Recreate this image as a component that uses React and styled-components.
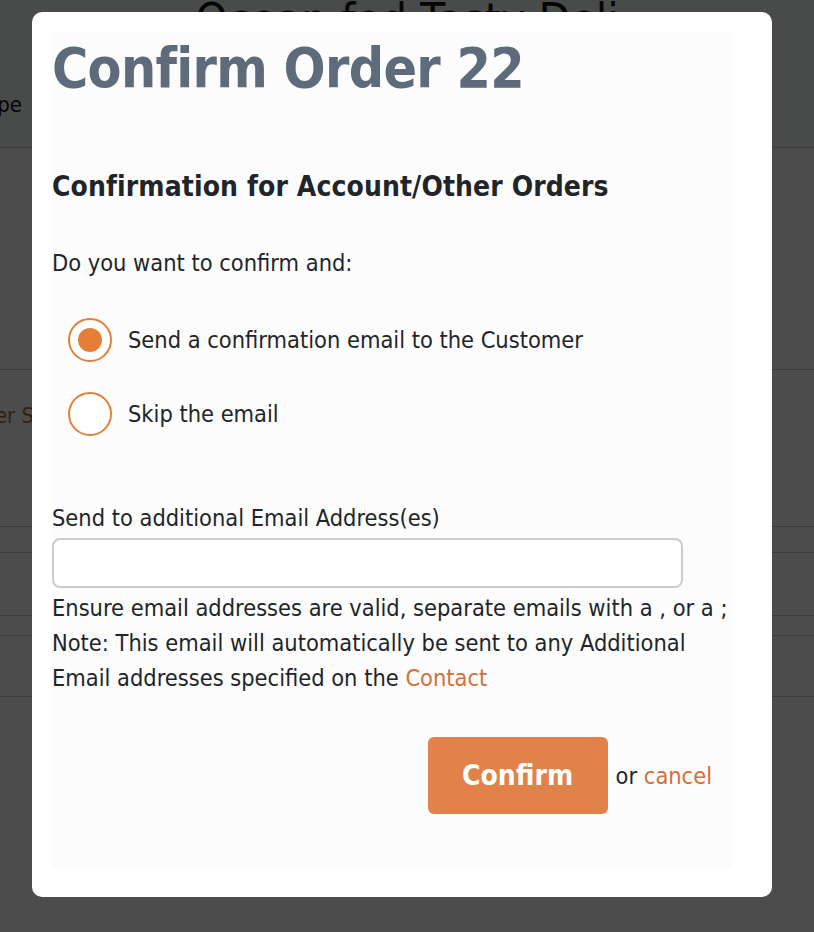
import React from 'react';
import styled, { createGlobalStyle } from 'styled-components';

const GlobalStyle = createGlobalStyle`
  html, body {
    margin: 0;
    padding: 0;
    background: #ffffff;
  }
  body {
    font-family: 'DejaVu Sans Condensed', 'DejaVu Sans', sans-serif;
    color: #212529;
  }
`

// the page that sits under the dimmed overlay
const BackPage = styled.div`
  width: 814px;
  height: 932px;
  overflow: hidden;
  background: #ffffff;
`
const BackHeader = styled.div`
  display: flow-root;
  height: 148px;
  background: #f6f7f9;
  border-bottom: 1px solid #cccccc;
  box-sizing: border-box;
  h1 {
    margin: -10px 0 0;
    text-align: center;
    font-size: 46px;
    font-weight: normal;
    line-height: 60px;
    color: #111111;
  }
`
const BackRow = styled.div`
  height: ${p => p.h}px;
  border-bottom: ${p => (p.line ? '1px solid #cccccc' : 'none')};
  box-sizing: border-box;
  display: flex;
  align-items: flex-start;
  justify-content: ${p => (p.edge ? 'flex-end' : 'flex-start')};
  width: ${p => (p.edge ? `${p.edge}px` : 'auto')};
  padding-top: ${p => p.pad || 0}px;
  span {
    white-space: nowrap;
    font-size: 22px;
    line-height: 26px;
    margin-left: ${p => p.shift || 0}px;
    color: ${p => p.tone || '#111111'};
  }
`
const BackLine = styled.div`
  height: ${p => p.h}px;
  border-bottom: 1px solid #cccccc;
  box-sizing: border-box;
`

const Overlay = styled.div`
  position: fixed;
  inset: 0;
  background: rgba(0, 0, 0, 0.7);
`
const Modal = styled.div`
  position: fixed;
  left: 32px;
  top: 12px;
  width: 740px;
  height: 885px;
  box-sizing: border-box;
  padding: 20px 40px 29px 20px;
  background: #ffffff;
  border-radius: 10px;
  display: flex;
`
const Panel = styled.div`
  flex: 1;
  background: #fcfcfc;
  display: flex;
  flex-direction: column;
`
const Title = styled.h1`
  margin: 0;
  font-size: 55px;
  line-height: 72px;
  font-weight: bold;
  color: #5e6b7a;
  letter-spacing: -0.7px;
`
const Subtitle = styled.h2`
  margin: 65px 0 0;
  font-size: 28px;
  line-height: 36px;
  font-weight: bold;
  color: #212529;
  letter-spacing: 0.1px;
`
const Text = styled.p`
  margin: ${p => p.top || 0}px 0 0;
  font-size: 23.4px;
  line-height: 35px;
  color: #212529;
`
const Options = styled.div`
  margin: 35px 0 0 16px;
  display: flex;
  flex-direction: column;
  gap: 26px;
`
const Option = styled.label`
  display: flex;
  align-items: center;
  gap: 16px;
  height: 48px;
  font-size: 23.4px;
  color: #212529;
`
const Radio = styled.span`
  width: 44px;
  height: 44px;
  box-sizing: border-box;
  border: 2px solid #e57e39;
  border-radius: 50%;
  background: #ffffff;
  display: flex;
  align-items: center;
  justify-content: center;
  &::after {
    content: '';
    width: 24px;
    height: 24px;
    border-radius: 50%;
    background: ${p => (p.checked ? '#e57e39' : 'transparent')};
  }
`
const EmailInput = styled.input`
  display: block;
  width: 631px;
  height: 50px;
  box-sizing: border-box;
  border: 2px solid #cccccc;
  border-radius: 8px;
  background: #ffffff;
  margin: 2px 0 0;
  font-size: 20px;
  outline: none;
`
const Link = styled.a`
  color: #d2703b;
  text-decoration: none;
`
const Actions = styled.div`
  margin-top: 41px;
  display: flex;
  align-items: center;
  justify-content: flex-end;
  padding-right: 20px;
  gap: 8px;
  font-size: 23.4px;
  color: #212529;
`
const ConfirmButton = styled.button`
  width: 180px;
  height: 77px;
  border: none;
  border-radius: 6px;
  background: #e0824a;
  color: #ffffff;
  font-family: inherit;
  font-size: 28px;
  font-weight: bold;
  cursor: pointer;
`

export default function App() {
  return (
    <>
      <GlobalStyle />
      <BackPage>
        <BackHeader>
          <h1>Ocean fed Tasty Deli</h1>
          <BackRow h={98} edge={22} pad={42}>
            <span>Order Type</span>
          </BackRow>
        </BackHeader>
        <BackLine h={222} />
        <BackRow h={157} line pad={33} shift={-41} tone="#c0602a">
          <span>Order Summary</span>
        </BackRow>
        <BackLine h={26} />
        <BackLine h={63} />
        <BackLine h={20} />
        <BackLine h={61} />
      </BackPage>
      <Overlay />
      <Modal>
        <Panel>
          <Title>Confirm Order 22</Title>
          <Subtitle>Confirmation for Account/Other Orders</Subtitle>
          <Text top={41}>Do you want to confirm and:</Text>
          <Options>
            <Option>
              <Radio checked />
              Send a confirmation email to the Customer
            </Option>
            <Option>
              <Radio />
              Skip the email
            </Option>
          </Options>
          <Text top={63}>Send to additional Email Address(es)</Text>
          <EmailInput type="text" />
          <Text top={3}>Ensure email addresses are valid, separate emails with a , or a ;</Text>
          <Text>Note: This email will automatically be sent to any Additional</Text>
          <Text>Email addresses specified on the <Link href="#">Contact</Link></Text>
          <Actions>
            <ConfirmButton>Confirm</ConfirmButton>
            <span>or <Link href="#">cancel</Link></span>
          </Actions>
        </Panel>
      </Modal>
    </>
  );
}
